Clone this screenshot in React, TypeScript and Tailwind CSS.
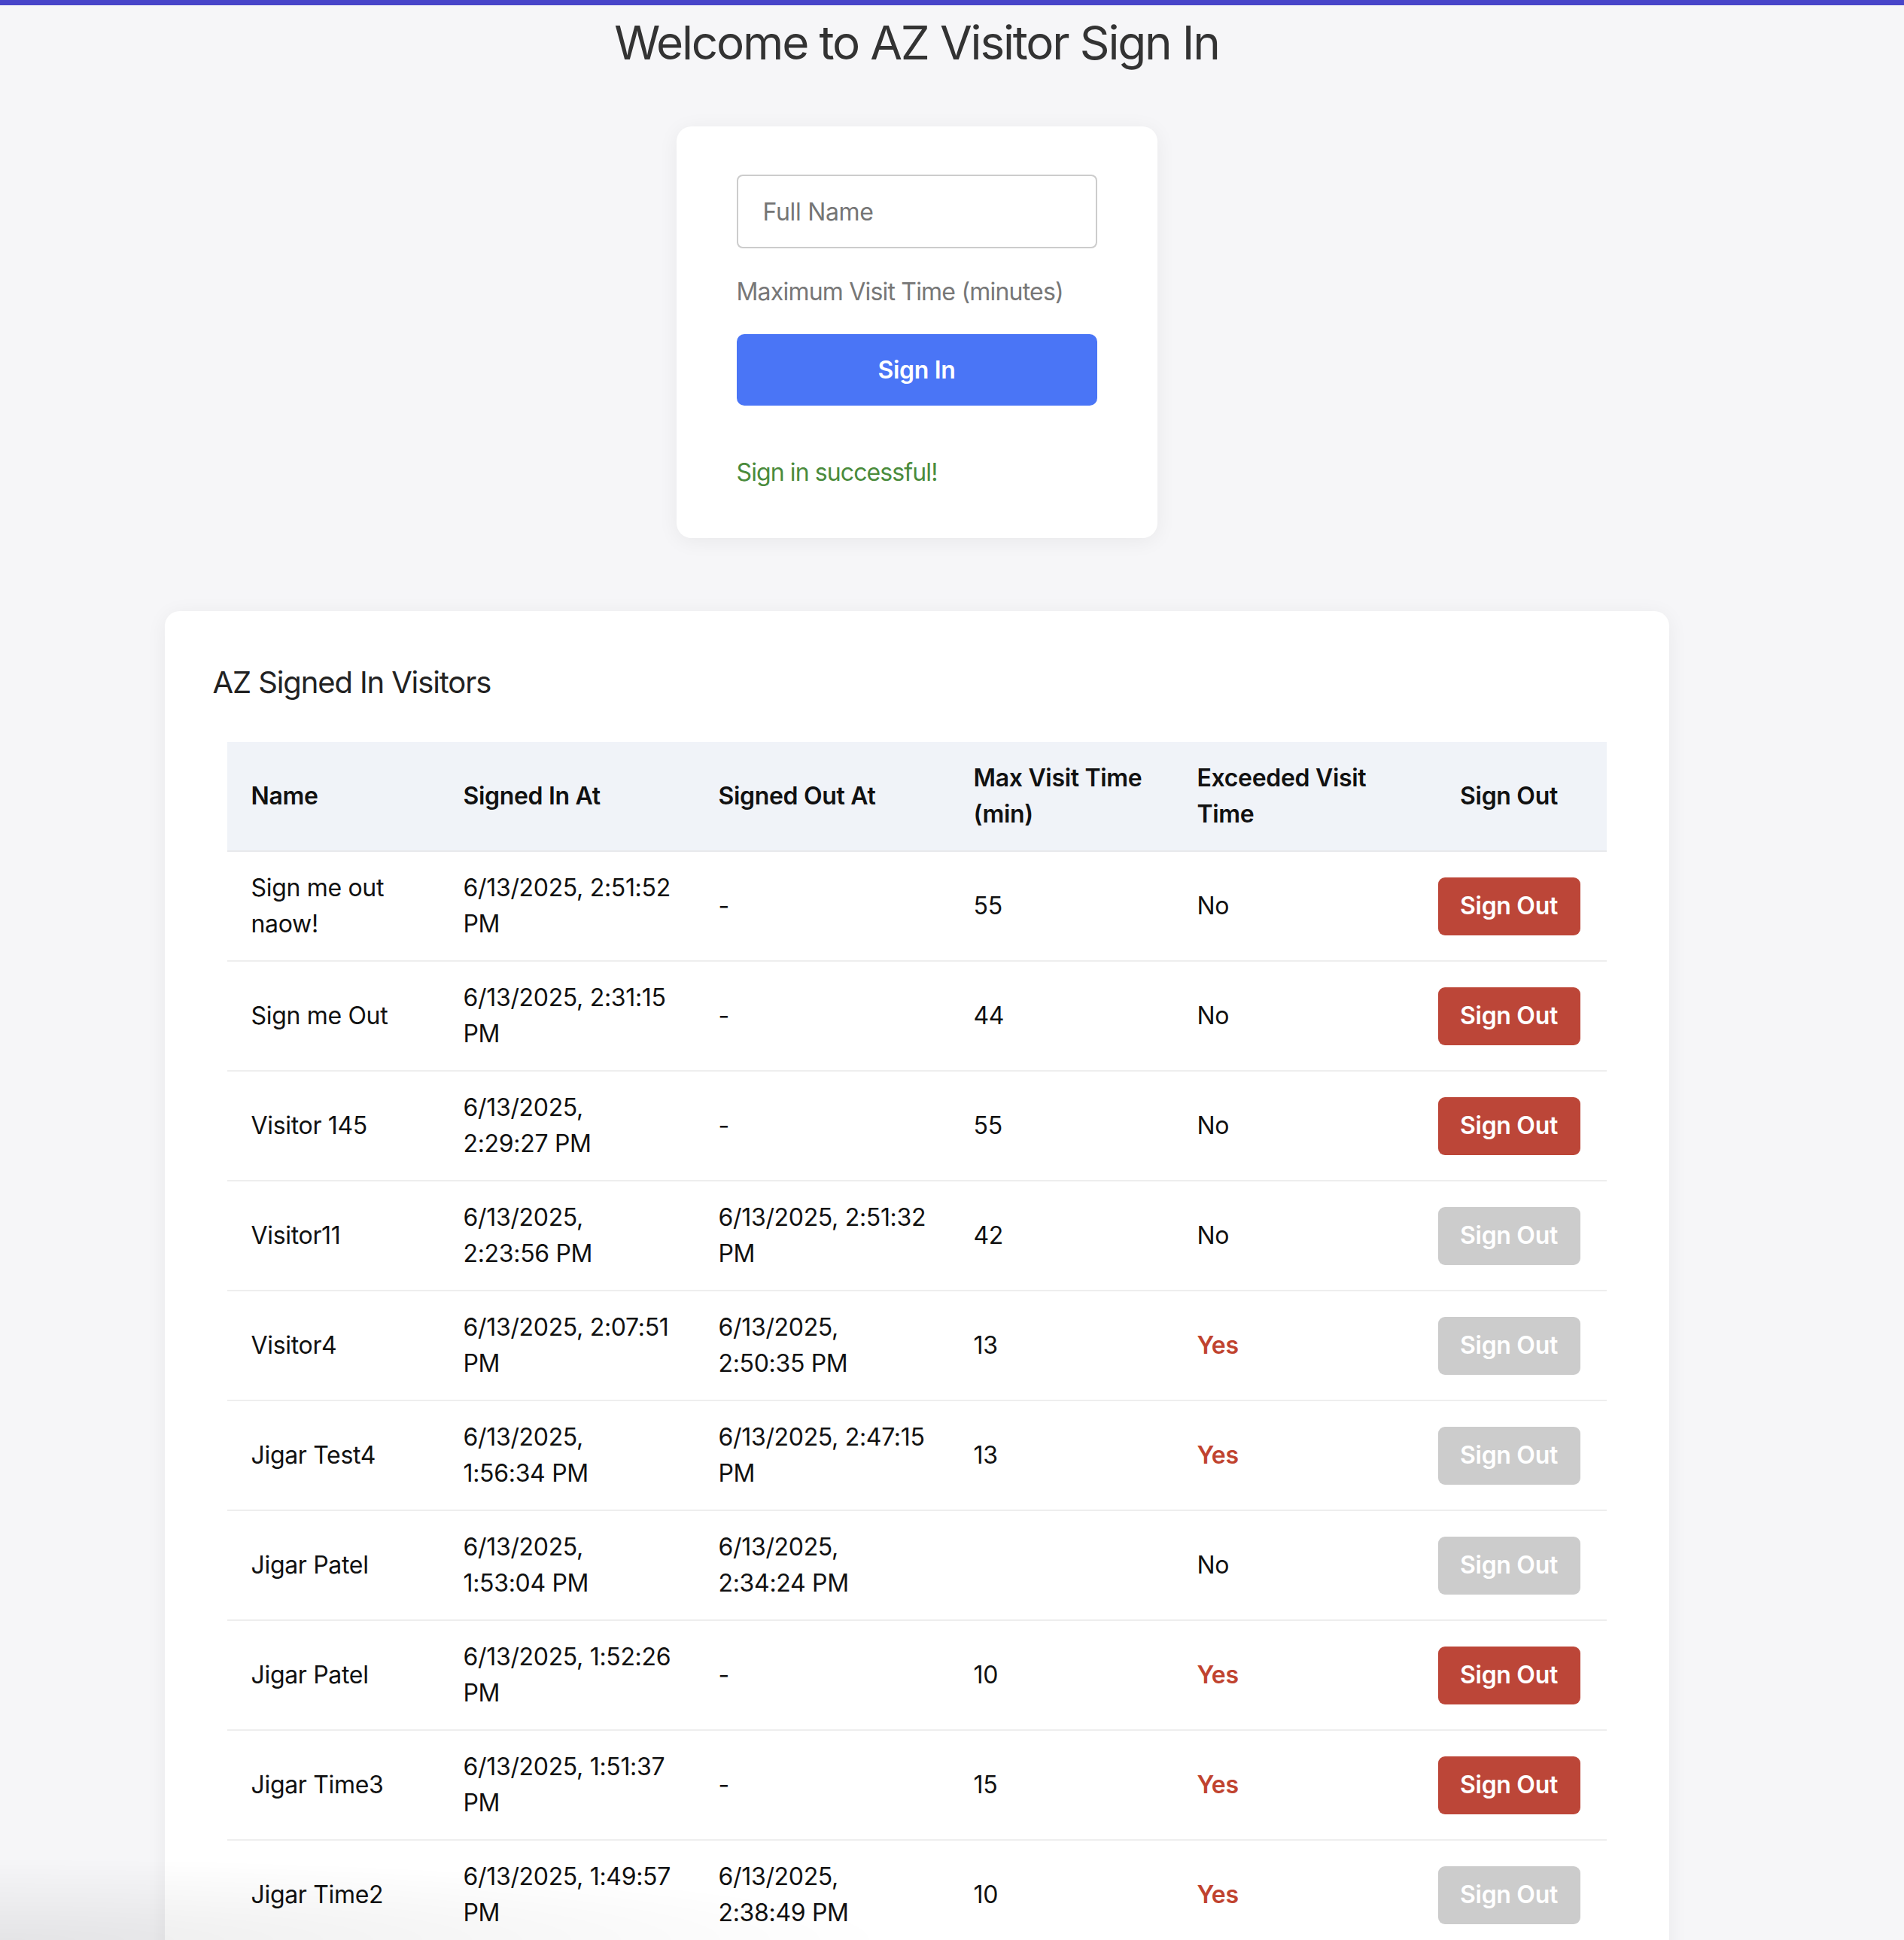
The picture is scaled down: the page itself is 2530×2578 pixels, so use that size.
type Visitor = {
  name: string[];
  signedIn: string[];
  signedOut: string[];
  maxTime: string;
  exceeded: boolean;
  canSignOut: boolean;
};

const visitors: Visitor[] = [
  { name: ['Sign me out', 'naow!'], signedIn: ['6/13/2025, 2:51:52', 'PM'], signedOut: ['-'], maxTime: '55', exceeded: false, canSignOut: true },
  { name: ['Sign me Out'], signedIn: ['6/13/2025, 2:31:15', 'PM'], signedOut: ['-'], maxTime: '44', exceeded: false, canSignOut: true },
  { name: ['Visitor 145'], signedIn: ['6/13/2025,', '2:29:27 PM'], signedOut: ['-'], maxTime: '55', exceeded: false, canSignOut: true },
  { name: ['Visitor11'], signedIn: ['6/13/2025,', '2:23:56 PM'], signedOut: ['6/13/2025, 2:51:32', 'PM'], maxTime: '42', exceeded: false, canSignOut: false },
  { name: ['Visitor4'], signedIn: ['6/13/2025, 2:07:51', 'PM'], signedOut: ['6/13/2025,', '2:50:35 PM'], maxTime: '13', exceeded: true, canSignOut: false },
  { name: ['Jigar Test4'], signedIn: ['6/13/2025,', '1:56:34 PM'], signedOut: ['6/13/2025, 2:47:15', 'PM'], maxTime: '13', exceeded: true, canSignOut: false },
  { name: ['Jigar Patel'], signedIn: ['6/13/2025,', '1:53:04 PM'], signedOut: ['6/13/2025,', '2:34:24 PM'], maxTime: '', exceeded: false, canSignOut: false },
  { name: ['Jigar Patel'], signedIn: ['6/13/2025, 1:52:26', 'PM'], signedOut: ['-'], maxTime: '10', exceeded: true, canSignOut: true },
  { name: ['Jigar Time3'], signedIn: ['6/13/2025, 1:51:37', 'PM'], signedOut: ['-'], maxTime: '15', exceeded: true, canSignOut: true },
  { name: ['Jigar Time2'], signedIn: ['6/13/2025, 1:49:57', 'PM'], signedOut: ['6/13/2025,', '2:38:49 PM'], maxTime: '10', exceeded: true, canSignOut: false },
];

function Lines({ lines }: { lines: string[] }) {
  return (
    <>
      {lines.map((line, i) => (
        <div key={i} className="whitespace-nowrap">
          {line}
        </div>
      ))}
    </>
  );
}

function SignInCard() {
  return (
    <div className="w-[639px] rounded-[20px] bg-white px-[80px] pt-[64px] pb-[63px] shadow-[0_4px_28px_rgba(0,0,0,0.06)]">
      <input
        placeholder="Full Name"
        className="block h-[98px] w-full rounded-[8px] border-2 border-[#cccccc] bg-white px-[33px] text-[32px] text-[#222] outline-none placeholder:text-[#757575]"
      />
      <p className="mt-[34px] text-[32px] leading-[48px] tracking-[-0.025em] text-[#777777]">
        Maximum Visit Time (minutes)
      </p>
      <button className="mt-[32px] h-[95px] w-full rounded-[10px] bg-[#4a75f6] text-[32px] font-semibold text-white">
        Sign In
      </button>
      <p className="mt-[65px] text-[32px] leading-[48px] tracking-[-0.028em] text-[#4a8b3c]">Sign in successful!</p>
    </div>
  );
}

function VisitorTable() {
  return (
    <div className="w-[1999px] rounded-[20px] bg-white px-[64px] pt-[65px] pb-[64px] shadow-[0_4px_28px_rgba(0,0,0,0.06)]">
      <h2 className="mb-[49px] text-[40px] leading-[60px] tracking-[-0.028em] text-[#222222]">AZ Signed In Visitors</h2>
      <div className="px-[19px]">
        <table className="w-full table-fixed text-[32px] leading-[48px] text-[#111111]">
          <colgroup>
            <col className="w-[282px]" />
            <col className="w-[339px]" />
            <col className="w-[339px]" />
            <col className="w-[297px]" />
            <col className="w-[323px]" />
            <col />
          </colgroup>
          <thead>
            <tr className="border-b-2 border-[#e8e9ec] bg-[#f0f3f8]">
              <th className="px-8 py-6 text-left font-semibold">Name</th>
              <th className="px-8 py-6 text-left font-semibold">Signed In At</th>
              <th className="px-8 py-6 text-left font-semibold">Signed Out At</th>
              <th className="px-8 py-6 text-left font-semibold">
                <Lines lines={['Max Visit Time', '(min)']} />
              </th>
              <th className="px-8 py-6 text-left font-semibold">
                <Lines lines={['Exceeded Visit', 'Time']} />
              </th>
              <th className="py-6 pl-[26px] pr-[32px] text-center font-semibold">Sign Out</th>
            </tr>
          </thead>
          <tbody>
            {visitors.map((v, i) => (
              <tr key={i} className="border-b-2 border-[#eeeeee]">
                <td className="px-8 py-6">
                  <Lines lines={v.name} />
                </td>
                <td className="px-8 py-6">
                  <Lines lines={v.signedIn} />
                </td>
                <td className="px-8 py-6">
                  <Lines lines={v.signedOut} />
                </td>
                <td className="px-8 py-6">{v.maxTime}</td>
                <td className="px-8 py-6">
                  {v.exceeded ? (
                    <span className="font-semibold text-[#c0432f]">Yes</span>
                  ) : (
                    'No'
                  )}
                </td>
                <td className="py-6 pl-[26px] pr-[32px] text-center">
                  <button
                    disabled={!v.canSignOut}
                    className={
                      v.canSignOut
                        ? 'h-[77px] w-[189px] rounded-[9px] bg-[#bc4638] text-[32px] font-semibold text-white'
                        : 'h-[77px] w-[189px] rounded-[9px] bg-[#cccccc] text-[32px] font-semibold text-white'
                    }
                  >
                    Sign Out
                  </button>
                </td>
              </tr>
            ))}
          </tbody>
        </table>
      </div>
    </div>
  );
}

export default function App() {
  return (
    <div className="min-h-screen bg-[#f6f6f8] font-['Inter',sans-serif] tracking-[-0.02em]">
      <div className="h-[7px] bg-[#4845c9]" />
      <div className="flex flex-col items-center pr-[94px]">
        <h1 className="mt-[12px] text-[62px] leading-[76px] tracking-[-0.035em] text-[#333333]">
          Welcome to AZ Visitor Sign In
        </h1>
        <div className="mt-[73px]">
          <SignInCard />
        </div>
        <div className="mt-[97px]">
          <VisitorTable />
        </div>
      </div>
      <div className="pointer-events-none fixed bottom-0 left-0 h-[110px] w-[1200px] bg-[radial-gradient(ellipse_at_bottom_left,rgba(0,0,0,0.07),transparent_70%)]" />
    </div>
  );
}
